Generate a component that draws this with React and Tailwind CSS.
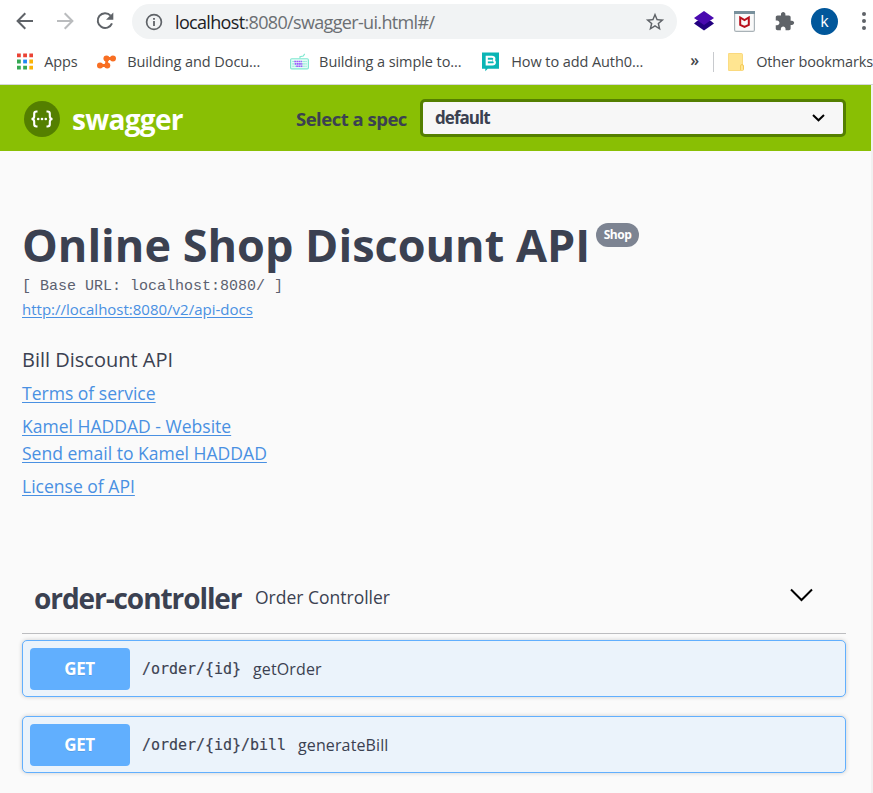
import React from 'react';

const BackIcon = () => (
  <svg className="h-5 w-5" viewBox="0 0 20 20" fill="none" stroke="currentColor" strokeWidth="2">
    <path d="M18 10H3M10.3 2.3 2.6 10l7.7 7.7" />
  </svg>
);

const ReloadIcon = () => (
  <svg className="h-5 w-5" viewBox="0 0 20 20">
    <path d="M15.6 4.6A7.4 7.4 0 1 0 17 12.4" fill="none" stroke="#5f6368" strokeWidth="2" />
    <path d="M18.3 1.5v7.3H11z" fill="#5f6368" />
  </svg>
);

const InfoIcon = () => (
  <svg className="h-[18px] w-[18px]" viewBox="0 0 18 18">
    <circle cx="9" cy="9" r="7.4" fill="none" stroke="#5f6368" strokeWidth="1.7" />
    <path d="M8.1 8h1.8v5H8.1zM8.1 4.9h1.8v1.8H8.1z" fill="#5f6368" />
  </svg>
);

const StarIcon = () => (
  <svg className="h-[22px] w-[22px]" viewBox="0 0 24 24" fill="#5f6368">
    <path d="m22 9.24-7.19-.62L12 2 9.19 8.63 2 9.24l5.46 4.73L5.82 21 12 17.27 18.18 21l-1.63-7.03L22 9.24zM12 15.4l-3.76 2.27 1-4.28-3.32-2.88 4.38-.38L12 6.1l1.71 4.04 4.38.38-3.32 2.88 1 4.28L12 15.4z" />
  </svg>
);

const LayersIcon = () => (
  <svg className="h-5 w-5" viewBox="0 0 20 20">
    <path d="M0 12.500l3-2.500h14l3 2.500-10 7z" fill="#220080" />
    <path d="M10 0 20 7 10 14 0 7z" fill="#4a0ab0" />
  </svg>
);

const ShieldIcon = () => (
  <svg className="h-[21px] w-[21px]" viewBox="0 0 21 21">
    <rect x=".6" y=".6" width="19.8" height="19.8" rx="1.5" fill="#fafafa" stroke="#a9b2b7" strokeWidth="1.2" />
    <path d="M0 0h21v3H0z" fill="#78909c" />
    <path d="M6.200 6.500v7.300l4.300 2.200 4.300-2.200V6.500L10.500 9z" fill="none" stroke="#b8101c" strokeWidth="2" />
  </svg>
);

const PuzzleIcon = () => (
  <svg className="h-[21px] w-[21px]" viewBox="0 0 24 24" fill="#5f6368">
    <path d="M20.5 11H19V7c0-1.1-.9-2-2-2h-4V3.5C13 2.12 11.88 1 10.500 1S8 2.120 8 3.500V5H4c-1.100 0-1.990.9-1.990 2v3.800H3.500c1.490 0 2.700 1.210 2.700 2.700s-1.210 2.700-2.700 2.700H2V20c0 1.100.9 2 2 2h3.800v-1.500c0-1.490 1.210-2.700 2.700-2.700 1.490 0 2.700 1.210 2.700 2.700V22H17c1.100 0 2-.9 2-2v-4h1.500c1.380 0 2.500-1.120 2.500-2.500S21.880 11 20.500 11z" />
  </svg>
);

const AppsIcon = () => (
  <svg className="h-[17px] w-[17px]" viewBox="0 0 17 17">
    <path d="M0 0h4v4H0zM6.500 0h4v4h-4zM13 0h4v4h-4z" fill="#ea4335" />
    <path d="M0 6.500h4v4H0zM0 13h4v4H0zM6.500 13h4v4h-4z" fill="#34a853" />
    <path d="M6.500 6.500h4v4h-4z" fill="#1e88f5" />
    <path d="M13 6.500h4v4h-4zM13 13h4v4h-4z" fill="#fbb306" />
  </svg>
);

const NodesIcon = () => (
  <svg className="h-[14px] w-5" viewBox="0 0 20 14" fill="#f86f23">
    <circle cx="10" cy="3.300" r="3.200" /><circle cx="16.800" cy="3.300" r="3.200" />
    <circle cx="3.200" cy="10.700" r="3.200" /><circle cx="10.800" cy="10.700" r="3.200" />
    <path d="M3 10.700h7.500M10 3.300h7M10.200 3.300v7" stroke="#f86f23" strokeWidth="3" />
  </svg>
);

const KeyboardIcon = () => (
  <svg className="h-[17px] w-5" viewBox="0 0 20 17" fill="none">
    <rect x=".6" y="5.600" width="18.800" height="10.600" rx="1.200" fill="#e6fbf7" stroke="#7fe8d0" strokeWidth="1.200" />
    <path d="M10.500 5V3.500l3.500-.7 1.500-2.300" stroke="#7fe8d0" strokeWidth="1.200" />
    <path d="M2.500 8.500h15M2.500 11h15M2.500 13.500h15" stroke="#7fe8d0" strokeWidth="1.200" strokeDasharray="1.500 .8" />
    <path d="M4.500 8.500h8M5 11h8M6.500 13.500h7" stroke="#a259ff" strokeWidth="1.700" strokeDasharray="1.800 .5" />
  </svg>
);

const BlockIcon = () => (
  <svg className="h-5 w-[18px]" viewBox="0 0 18 20">
    <path d="M0 0h18v17H6l-2.500 2.800V17H0z" fill="#0ab5b5" />
    <path d="M5 4.500h5.500c3.200 0 3.200 3.900.8 3.900 3 0 3 4.100-.3 4.100H5z" fill="none" stroke="#fff" strokeWidth="2.300" />
    <path d="M5 8.500h6" stroke="#fff" strokeWidth="1.800" />
  </svg>
);

const FolderIcon = () => (
  <svg className="h-[18px] w-4 shrink-0" viewBox="0 0 16 18">
    <path d="M1 .5h12.500a1 1 0 0 1 1 1V12l1 1v3.500a1 1 0 0 1-1 1H1a.8.8 0 0 1-.8-.8V1.300A.8.8 0 0 1 1 .5z" fill="#ffe591" stroke="#f8cf5f" strokeWidth=".7" />
    <path d="M12.500 17v-4a1.500 1.500 0 0 1 3 0v3.500" fill="none" stroke="#f3c74f" strokeWidth=".8" />
  </svg>
);

const SwaggerIcon = () => (
  <svg className="mt-px h-9 w-9" viewBox="0 0 36 36">
    <circle cx="18" cy="18" r="18" fill="#547f00" />
    <g fill="none" stroke="#fff" strokeWidth="2.100">
      <path d="M13.500 10.500h-1c-1.800 0-2.300.8-2.300 2.200v2.600c0 1.800-.8 2.700-2.700 2.700 1.900 0 2.700.9 2.700 2.700v2.600c0 1.400.5 2.200 2.300 2.200h1" />
      <path d="M22.500 10.500h1c1.800 0 2.300.8 2.300 2.200v2.600c0 1.800.8 2.700 2.700 2.700-1.900 0-2.700.9-2.700 2.700v2.600c0 1.400-.5 2.200-2.300 2.200h-1" />
    </g>
    <g fill="#fff"><circle cx="14.200" cy="18" r="1.300" /><circle cx="18" cy="18" r="1.300" /><circle cx="21.800" cy="18" r="1.300" /></g>
  </svg>
);

const ui = "font-['Open_Sans','Noto_Sans',sans-serif]";

function BrowserBar() {
  return (
    <header className="h-[85px] overflow-hidden border-b border-[#d5d7da] bg-white">
      <div className="flex h-[42px] items-center whitespace-nowrap pl-[15px] text-[#5f6368]">
        <BackIcon />
        <span className="ml-5 rotate-180 text-[#babcbe]"><BackIcon /></span>
        <span className="ml-5"><ReloadIcon /></span>
        <div className="ml-[17px] mt-px flex h-[35px] w-[545px] shrink-0 items-center rounded-full bg-[#f1f3f4] pl-[13px] pr-[11px]">
          <InfoIcon />
          <span className="ml-3 text-[18px] leading-6 tracking-[-0.66px] text-[#6b6f73]">
            <span className="text-[#202124]">localhost</span>:8080/swagger-ui.html#/
          </span>
          <span className="ml-auto"><StarIcon /></span>
        </div>
        <span className="ml-[17px]"><LayersIcon /></span>
        <span className="ml-5"><ShieldIcon /></span>
        <span className="ml-[19px]"><PuzzleIcon /></span>
        <span className="ml-4 flex h-[27px] w-[27px] shrink-0 items-center justify-center rounded-full bg-[#01579b] text-[16px] text-white">k</span>
        <span className="ml-6 flex flex-col gap-[3px]">
          <i className="h-1 w-1 rounded-full bg-[#5f6368]" />
          <i className="h-1 w-1 rounded-full bg-[#5f6368]" />
          <i className="h-1 w-1 rounded-full bg-[#5f6368]" />
        </span>
      </div>
      <div className="flex h-[39px] items-center whitespace-nowrap pl-[17px] text-[14.5px] tracking-[-0.08px] text-[#44474a]">
        <AppsIcon />
        <span className="ml-[11px] w-[53px] shrink-0">Apps</span>
        <NodesIcon />
        <span className="ml-[11px] w-[163px] shrink-0">Building and Docu...</span>
        <KeyboardIcon />
        <span className="ml-[10px] w-[163px] shrink-0">Building a simple to...</span>
        <BlockIcon />
        <span className="ml-3 w-[179px] shrink-0">How to add Auth0...</span>
        <span className="w-[23px] shrink-0 pb-[3px] text-[16px] font-semibold leading-5">»</span>
        <span className="mr-[14px] h-5 w-px shrink-0 bg-[#c8cace]" />
        <FolderIcon />
        <span className="ml-[12px] tracking-[-0.15px]">Other bookmarks</span>
      </div>
    </header>
  );
}

function Topbar() {
  return (
    <div className="flex h-[66px] items-center bg-[#89bf04] pl-6 pr-[25px]">
      <SwaggerIcon />
      <span className="ml-[12px] mt-[2px] w-[224px] text-[28px] font-bold leading-8 tracking-[-0.7px] text-white">swagger</span>
      <span className="mt-[2px] w-[124px] whitespace-nowrap text-[18.500px] font-bold tracking-[-0.5px] text-[#3b4151]">Select a spec</span>
      <div className="flex h-[38px] w-[426px] items-center justify-between rounded-[5px] border-[3px] border-[#547f00] bg-[#f7f7f7] pl-3 pr-[18px]">
        <span className="text-[17px] font-bold tracking-[-0.95px] text-[#3b4151]">default</span>
        <svg className="h-2 w-[13px]" viewBox="0 0 13 8" fill="none" stroke="#000" strokeWidth="2"><path d="m1 1 5.500 5.300L12 1" /></svg>
      </div>
    </div>
  );
}

const linkClass = 'text-[#4990e2] underline underline-offset-2';

function Info() {
  return (
    <section className="h-[414px] whitespace-nowrap pt-[64px] text-[#3b4151]">
      <h1 className="flex h-[60px] items-start text-[45px] font-bold leading-[60px]">
        <span>Online Shop Discount API</span>
        <span className="ml-[6px] mt-2 flex h-6 w-[43px] items-center justify-center rounded-full bg-[#7d8492] text-[12px] leading-6 tracking-[-0.4px] text-white">Shop</span>
      </h1>
      <pre className="mt-[2px] h-[20px] font-['Liberation_Mono',monospace] text-[15px] leading-[19px] text-[#5c6170]">[ Base URL: localhost:8080/ ]</pre>
      <div className="h-[25px] text-[15px] leading-[25px]"><a className={linkClass}>http://localhost:8080/v2/api-docs</a></div>
      <div className="mt-[24px] h-[34px] text-[20px] leading-[28px]">Bill Discount API</div>
      <div className="text-[17.550px] leading-[27px]">
        <div className="mb-[6px]"><a className={linkClass}>Terms of service</a></div>
        <div><a className={linkClass}>Kamel HADDAD - Website</a></div>
        <div className="mb-[6px]"><a className={linkClass}>Send email to Kamel HADDAD</a></div>
        <div><a className={linkClass}>License of API</a></div>
      </div>
    </section>
  );
}

function Operation({ path, summary }) {
  return (
    <div className="flex h-[57px] items-center rounded-[5px] border border-[#61affe] bg-[#ebf3fb] px-[7px] text-[#3b4151] shadow-[0_0_4px_rgba(0,0,0,0.19)]">
      <span className="flex h-[42px] w-[100px] items-center justify-center rounded-[4px] bg-[#61affe] pr-px text-[17px] font-bold tracking-[-0.4px] text-white [text-shadow:0_1px_0_rgba(0,0,0,0.1)]">GET</span>
      <span className="ml-[12px] mt-[2px] font-['DejaVu_Sans_Mono',monospace] text-[15px] tracking-[-0.03px] [-webkit-text-stroke:0.15px_#3b4151]">{path}</span>
      <span className="ml-[12px] text-[16px] tracking-[0.12px]">{summary}</span>
    </div>
  );
}

function Controller() {
  return (
    <section className="text-[#3b4151]">
      <div className="flex h-[69px] items-center border-b border-[#bcbdc0] pb-1 pl-3 pr-[33px]">
        <h2 className="mt-[2px] w-[221px] whitespace-nowrap text-[28px] font-bold tracking-[-1.080px]">order-controller</h2>
        <span className="whitespace-nowrap text-[17.500px]">Order Controller</span>
        <svg className="mb-[5px] ml-auto h-[14px] w-[23px]" viewBox="0 0 23 14" fill="none" stroke="#000" strokeWidth="2"><path d="m1 1.500 10.500 10.500L22 1.500" /></svg>
      </div>
      <div className="mt-[6px] flex flex-col gap-[19px]">
        <Operation path="/order/{id}" summary="getOrder" />
        <Operation path="/order/{id}/bill" summary="generateBill" />
      </div>
    </section>
  );
}

export default function App() {
  return (
    <div className={`h-[793px] w-[873px] overflow-hidden bg-[#fafafa] ${ui}`}>
      <BrowserBar />
      <div className="h-[708px] border-r-2 border-[#f1f1f1]">
        <Topbar />
        <main className="ml-[22px] w-[824px]">
          <Info />
          <Controller />
        </main>
      </div>
    </div>
  );
}
